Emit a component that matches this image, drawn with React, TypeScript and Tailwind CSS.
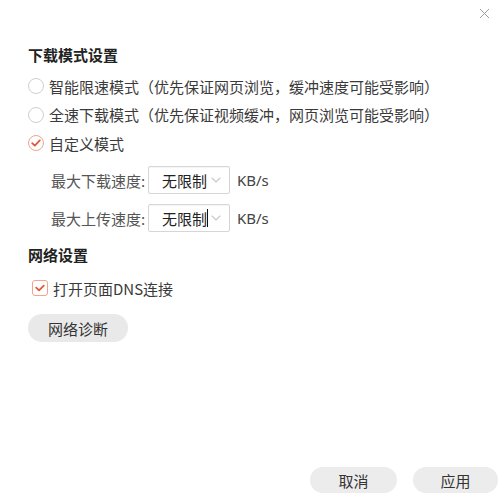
import { X, ChevronDown } from 'lucide-react';

const font = { fontFamily: '"Microsoft YaHei", "Noto Sans CJK SC", "Noto Sans", sans-serif' };

const Radio = ({ checked, label }: { checked?: boolean; label: string }) => (
  <div className="flex items-center h-[28px]">
    {checked ? (
      <span className="w-[16px] h-[16px] rounded-full border border-[#f0a58c] flex items-center justify-center">
        <svg width="10" height="8" viewBox="0 0 10 8">
          <path d="M1.2 4.2 L3.8 6.6 L8.8 1.4" fill="none" stroke="#e2583a" strokeWidth="1.8" strokeLinecap="round" strokeLinejoin="round" />
        </svg>
      </span>
    ) : (
      <span className="w-[16px] h-[16px] rounded-full border border-[#cfcfcf] bg-white" />
    )}
    <span className="ml-[5px] text-[15px] text-[#3a3a3a] leading-none">{label}</span>
  </div>
);

const SpeedRow = ({ label, caret }: { label: string; caret?: boolean }) => (
  <div className="flex items-center h-[28px] pl-[23px]">
    <span className="w-[97px] text-[15px] text-[#555] leading-none">{label}</span>
    <div className="w-[82px] h-[28px] border border-[#d6d6d6] rounded-[2px] bg-white flex items-center pl-[13px] pr-[5px] shadow-[inset_0_1px_1px_rgba(0,0,0,0.04)]">
      <span className="text-[15px] text-[#222] leading-none">无限制</span>
      {caret && <span className="w-px h-[18px] bg-[#111]" />}
      <ChevronDown className="ml-auto text-[#c8c8c8]" size={16} strokeWidth={1.6} />
    </div>
    <span className="ml-[7px] text-[15px] text-[#444] leading-none" style={{ fontFamily: '"Noto Sans", sans-serif' }}>KB/s</span>
  </div>
);

const App = () => {
  return (
    <div className="w-[503px] h-[495px] bg-white flex flex-col relative" style={font}>
      <div className="flex justify-end pt-[5px] pr-[10px] h-[46px]">
        <X size={17} strokeWidth={1.4} className="text-[#9a9a9a]" />
      </div>

      <div className="pl-[28px] pr-[10px]">
        <h2 className="text-[15px] font-bold text-[#222] leading-none h-[16px] mt-[1px]">下载模式设置</h2>

        <div className="mt-[9px] flex flex-col gap-[0.5px]">
          <Radio label="智能限速模式（优先保证网页浏览，缓冲速度可能受影响）" />
          <Radio label="全速下载模式（优先保证视频缓冲，网页浏览可能受影响）" />
          <Radio checked label="自定义模式" />
        </div>

        <div className="mt-[9px] flex flex-col gap-[10px]">
          <SpeedRow label="最大下载速度:" />
          <SpeedRow label="最大上传速度:" caret />
        </div>

        <h2 className="mt-[15px] text-[15px] font-bold text-[#222] leading-none h-[16px]">网络设置</h2>

        <div className="mt-[17px] flex items-center h-[16px] pl-[4px]">
          <span className="w-[16px] h-[16px] rounded-[3px] border border-[#f0a58c] flex items-center justify-center">
            <svg width="10" height="8" viewBox="0 0 10 8">
              <path d="M1.2 3.6 L4 6.4 L8.8 1.6" fill="none" stroke="#e2583a" strokeWidth="1.8" strokeLinecap="round" strokeLinejoin="round" />
            </svg>
          </span>
          <span className="ml-[5px] text-[15px] text-[#3a3a3a] leading-none">打开页面DNS连接</span>
        </div>

        <button className="mt-[18px] w-[100px] h-[28px] rounded-full bg-[#e9e9e9] text-[15px] text-[#333] leading-none">
          网络诊断
        </button>
      </div>

      <div className="mt-auto flex justify-end gap-[16px] pr-[5px] pb-[2px]">
        <button className="w-[87px] h-[26px] rounded-full bg-[#ececec] text-[15px] text-[#333] leading-none">取消</button>
        <button className="w-[85px] h-[26px] rounded-full bg-[#ececec] text-[15px] text-[#333] leading-none">应用</button>
      </div>
    </div>
  );
};

export default App;
